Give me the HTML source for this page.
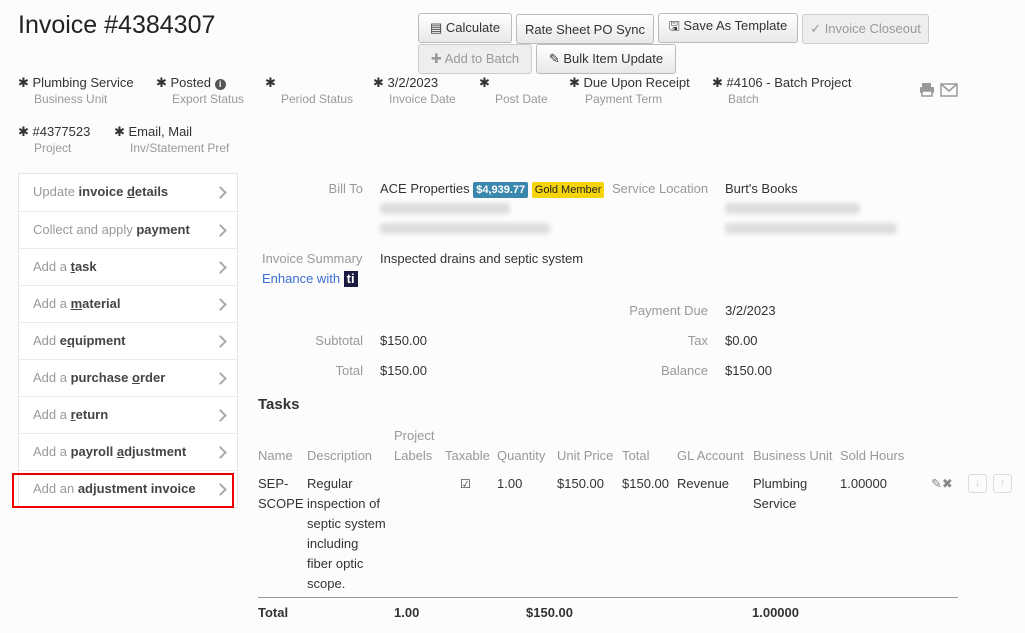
<!DOCTYPE html>
<html><head><meta charset="utf-8"><style>
*{margin:0;padding:0;box-sizing:border-box}
body{width:1025px;height:633px;background:#fcfcfc;font-family:"Liberation Sans",sans-serif;font-size:13px;color:#333;position:relative;overflow:hidden}
.a{position:absolute;white-space:nowrap}
.l{color:#999}
.lb{color:#999;font-size:12px}
.btn{position:absolute;height:30px;border:1px solid #bbb;border-radius:3px;background:linear-gradient(#fff,#e8e8e8);font-size:13px;color:#333;display:flex;align-items:center;justify-content:center;gap:4px}
.btn.d{color:#999;background:#eee;border-color:#ccc}
.side{position:absolute;left:18px;top:173px;width:220px;border:1px solid #e4e4e4;background:#fff}
.side div{height:37px;border-top:1px solid #eaeaea;padding-left:14px;line-height:36px;color:#999;position:relative}
.side div:first-child{border-top:none}
.side b{color:#444;font-weight:bold}
.side div:after{content:"";position:absolute;right:12px;top:14px;width:7px;height:7px;border-right:2px solid #aaa;border-top:2px solid #aaa;transform:rotate(45deg)}
.r{text-align:right}
.bl{position:absolute;height:11px;background:#ddd;filter:blur(2.5px);border-radius:4px}
.row{line-height:20px;top:474px}
</style></head><body>
<div class="a" style="left:18px;top:11px;font-size:25px;color:#222">Invoice #4384307</div>

<div class="btn" style="left:418px;top:13px;width:94px">▤ Calculate</div>
<div class="btn" style="left:516px;top:14px;width:138px">Rate Sheet PO Sync</div>
<div class="btn" style="left:658px;top:13px;width:140px">🖫 Save As Template</div>
<div class="btn d" style="left:802px;top:14px;width:127px">✓ Invoice Closeout</div>
<div class="btn d" style="left:418px;top:44px;width:114px">✚ Add to Batch</div>
<div class="btn" style="left:536px;top:44px;width:140px">✎ Bulk Item Update</div>

<div class="a" style="left:18px;top:75px">✱ Plumbing Service</div><div class="a lb" style="left:34px;top:92px">Business Unit</div>
<div class="a" style="left:156px;top:75px">✱ Posted <span style="display:inline-block;width:11px;height:11px;border-radius:50%;background:#555;color:#fff;font-size:9px;text-align:center;line-height:11px;font-weight:bold">i</span></div><div class="a lb" style="left:172px;top:92px">Export Status</div>
<div class="a" style="left:265px;top:75px">✱</div><div class="a lb" style="left:281px;top:92px">Period Status</div>
<div class="a" style="left:373px;top:75px">✱ 3/2/2023</div><div class="a lb" style="left:389px;top:92px">Invoice Date</div>
<div class="a" style="left:479px;top:75px">✱</div><div class="a lb" style="left:495px;top:92px">Post Date</div>
<div class="a" style="left:569px;top:75px">✱ Due Upon Receipt</div><div class="a lb" style="left:585px;top:92px">Payment Term</div>
<div class="a" style="left:712px;top:75px">✱ #4106 - Batch Project</div><div class="a lb" style="left:728px;top:92px">Batch</div>
<svg class="a" style="left:919px;top:82px" width="40" height="16" viewBox="0 0 40 16"><g fill="#999"><rect x="3" y="1" width="9" height="4"/><rect x="1" y="5" width="14" height="6" rx="1"/><rect x="3" y="9" width="10" height="5" fill="#fff" stroke="#999" stroke-width="1.5"/></g><g fill="none" stroke="#999" stroke-width="1.5"><rect x="22" y="2" width="16" height="12"/><path d="M22 2l8 7 8-7"/></g></svg>
<div class="a" style="left:18px;top:124px">✱ #4377523</div><div class="a lb" style="left:34px;top:141px">Project</div>
<div class="a" style="left:114px;top:124px">✱ Email, Mail</div><div class="a lb" style="left:130px;top:141px">Inv/Statement Pref</div>

<div class="side">
<div>Update <b>invoice <u>d</u>etails</b></div>
<div>Collect and apply <b>payment</b></div>
<div>Add a <b><u>t</u>ask</b></div>
<div>Add a <b><u>m</u>aterial</b></div>
<div>Add <b>e<u>q</u>uipment</b></div>
<div>Add a <b>purchase <u>o</u>rder</b></div>
<div>Add a <b><u>r</u>eturn</b></div>
<div>Add a <b>payroll <u>a</u>djustment</b></div>
<div>Add an <b>adjustment invoice</b></div>
</div>
<div class="a" style="left:12px;top:473px;width:222px;height:35px;border:2px solid #e00"></div>

<div class="a l r" style="left:300px;top:181px;width:63px">Bill To</div>
<div class="a" style="left:380px;top:181px">ACE Properties <span style="background:#3a87ad;color:#fff;font-weight:bold;font-size:11px;padding:2px 3px;border-radius:2px">$4,939.77</span> <span style="background:#f6d40a;color:#222;font-size:11px;padding:2px 3px;border-radius:2px">Gold Member</span></div>
<div class="bl" style="left:380px;top:203px;width:130px"></div>
<div class="bl" style="left:380px;top:223px;width:170px"></div>
<div class="a l" style="left:612px;top:181px">Service Location</div>
<div class="a" style="left:725px;top:181px">Burt's Books</div>
<div class="bl" style="left:725px;top:203px;width:135px"></div>
<div class="bl" style="left:725px;top:223px;width:172px"></div>
<div class="a l" style="left:262px;top:251px">Invoice Summary</div>
<div class="a" style="left:380px;top:251px">Inspected drains and septic system</div>
<div class="a" style="left:262px;top:271px;color:#3b6fd6">Enhance with <span style="background:#1a1a40;color:#fff;font-weight:bold;padding:0 3px;display:inline-block;line-height:16px">ti</span></div>

<div class="a l r" style="left:600px;top:303px;width:108px">Payment Due</div><div class="a" style="left:725px;top:303px">3/2/2023</div>
<div class="a l r" style="left:280px;top:333px;width:83px">Subtotal</div><div class="a" style="left:380px;top:333px">$150.00</div>
<div class="a l r" style="left:600px;top:333px;width:108px">Tax</div><div class="a" style="left:725px;top:333px">$0.00</div>
<div class="a l r" style="left:280px;top:363px;width:83px">Total</div><div class="a" style="left:380px;top:363px">$150.00</div>
<div class="a l r" style="left:600px;top:363px;width:108px">Balance</div><div class="a" style="left:725px;top:363px">$150.00</div>

<div class="a" style="left:258px;top:396px;font-size:15px;font-weight:bold;color:#333">Tasks</div>
<div class="a l" style="left:394px;top:428px">Project</div>
<div class="a l" style="left:258px;top:448px">Name</div>
<div class="a l" style="left:307px;top:448px">Description</div>
<div class="a l" style="left:394px;top:448px">Labels</div>
<div class="a l" style="left:445px;top:448px">Taxable</div>
<div class="a l" style="left:497px;top:448px">Quantity</div>
<div class="a l" style="left:557px;top:448px">Unit Price</div>
<div class="a l" style="left:622px;top:448px">Total</div>
<div class="a l" style="left:677px;top:448px">GL Account</div>
<div class="a l" style="left:753px;top:448px">Business Unit</div>
<div class="a l" style="left:840px;top:448px">Sold Hours</div>

<div class="a row" style="left:258px">SEP-<br>SCOPE</div>
<div class="a row" style="left:307px">Regular<br>inspection of<br>septic system<br>including<br>fiber optic<br>scope.</div>
<div class="a row" style="left:460px;font-size:12px">☑</div>
<div class="a row" style="left:497px">1.00</div>
<div class="a row" style="left:557px">$150.00</div>
<div class="a row" style="left:622px">$150.00</div>
<div class="a row" style="left:677px">Revenue</div>
<div class="a row" style="left:753px">Plumbing<br>Service</div>
<div class="a row" style="left:840px">1.00000</div>
<div class="a row" style="left:931px;color:#888;font-size:13px">✎✖</div>
<div class="a" style="left:968px;top:474px;width:19px;height:19px;border:1px solid #ddd;border-radius:3px;color:#ccc;text-align:center;font-size:11px;line-height:17px">↓</div>
<div class="a" style="left:993px;top:474px;width:19px;height:19px;border:1px solid #ddd;border-radius:3px;color:#ccc;text-align:center;font-size:11px;line-height:17px">↑</div>

<div class="a" style="left:258px;top:597px;width:700px;height:1px;background:#999"></div>
<div class="a" style="left:258px;top:605px;font-weight:bold">Total</div>
<div class="a" style="left:394px;top:605px;font-weight:bold">1.00</div>
<div class="a" style="left:526px;top:605px;font-weight:bold">$150.00</div>
<div class="a" style="left:752px;top:605px;font-weight:bold">1.00000</div>
</body></html>
